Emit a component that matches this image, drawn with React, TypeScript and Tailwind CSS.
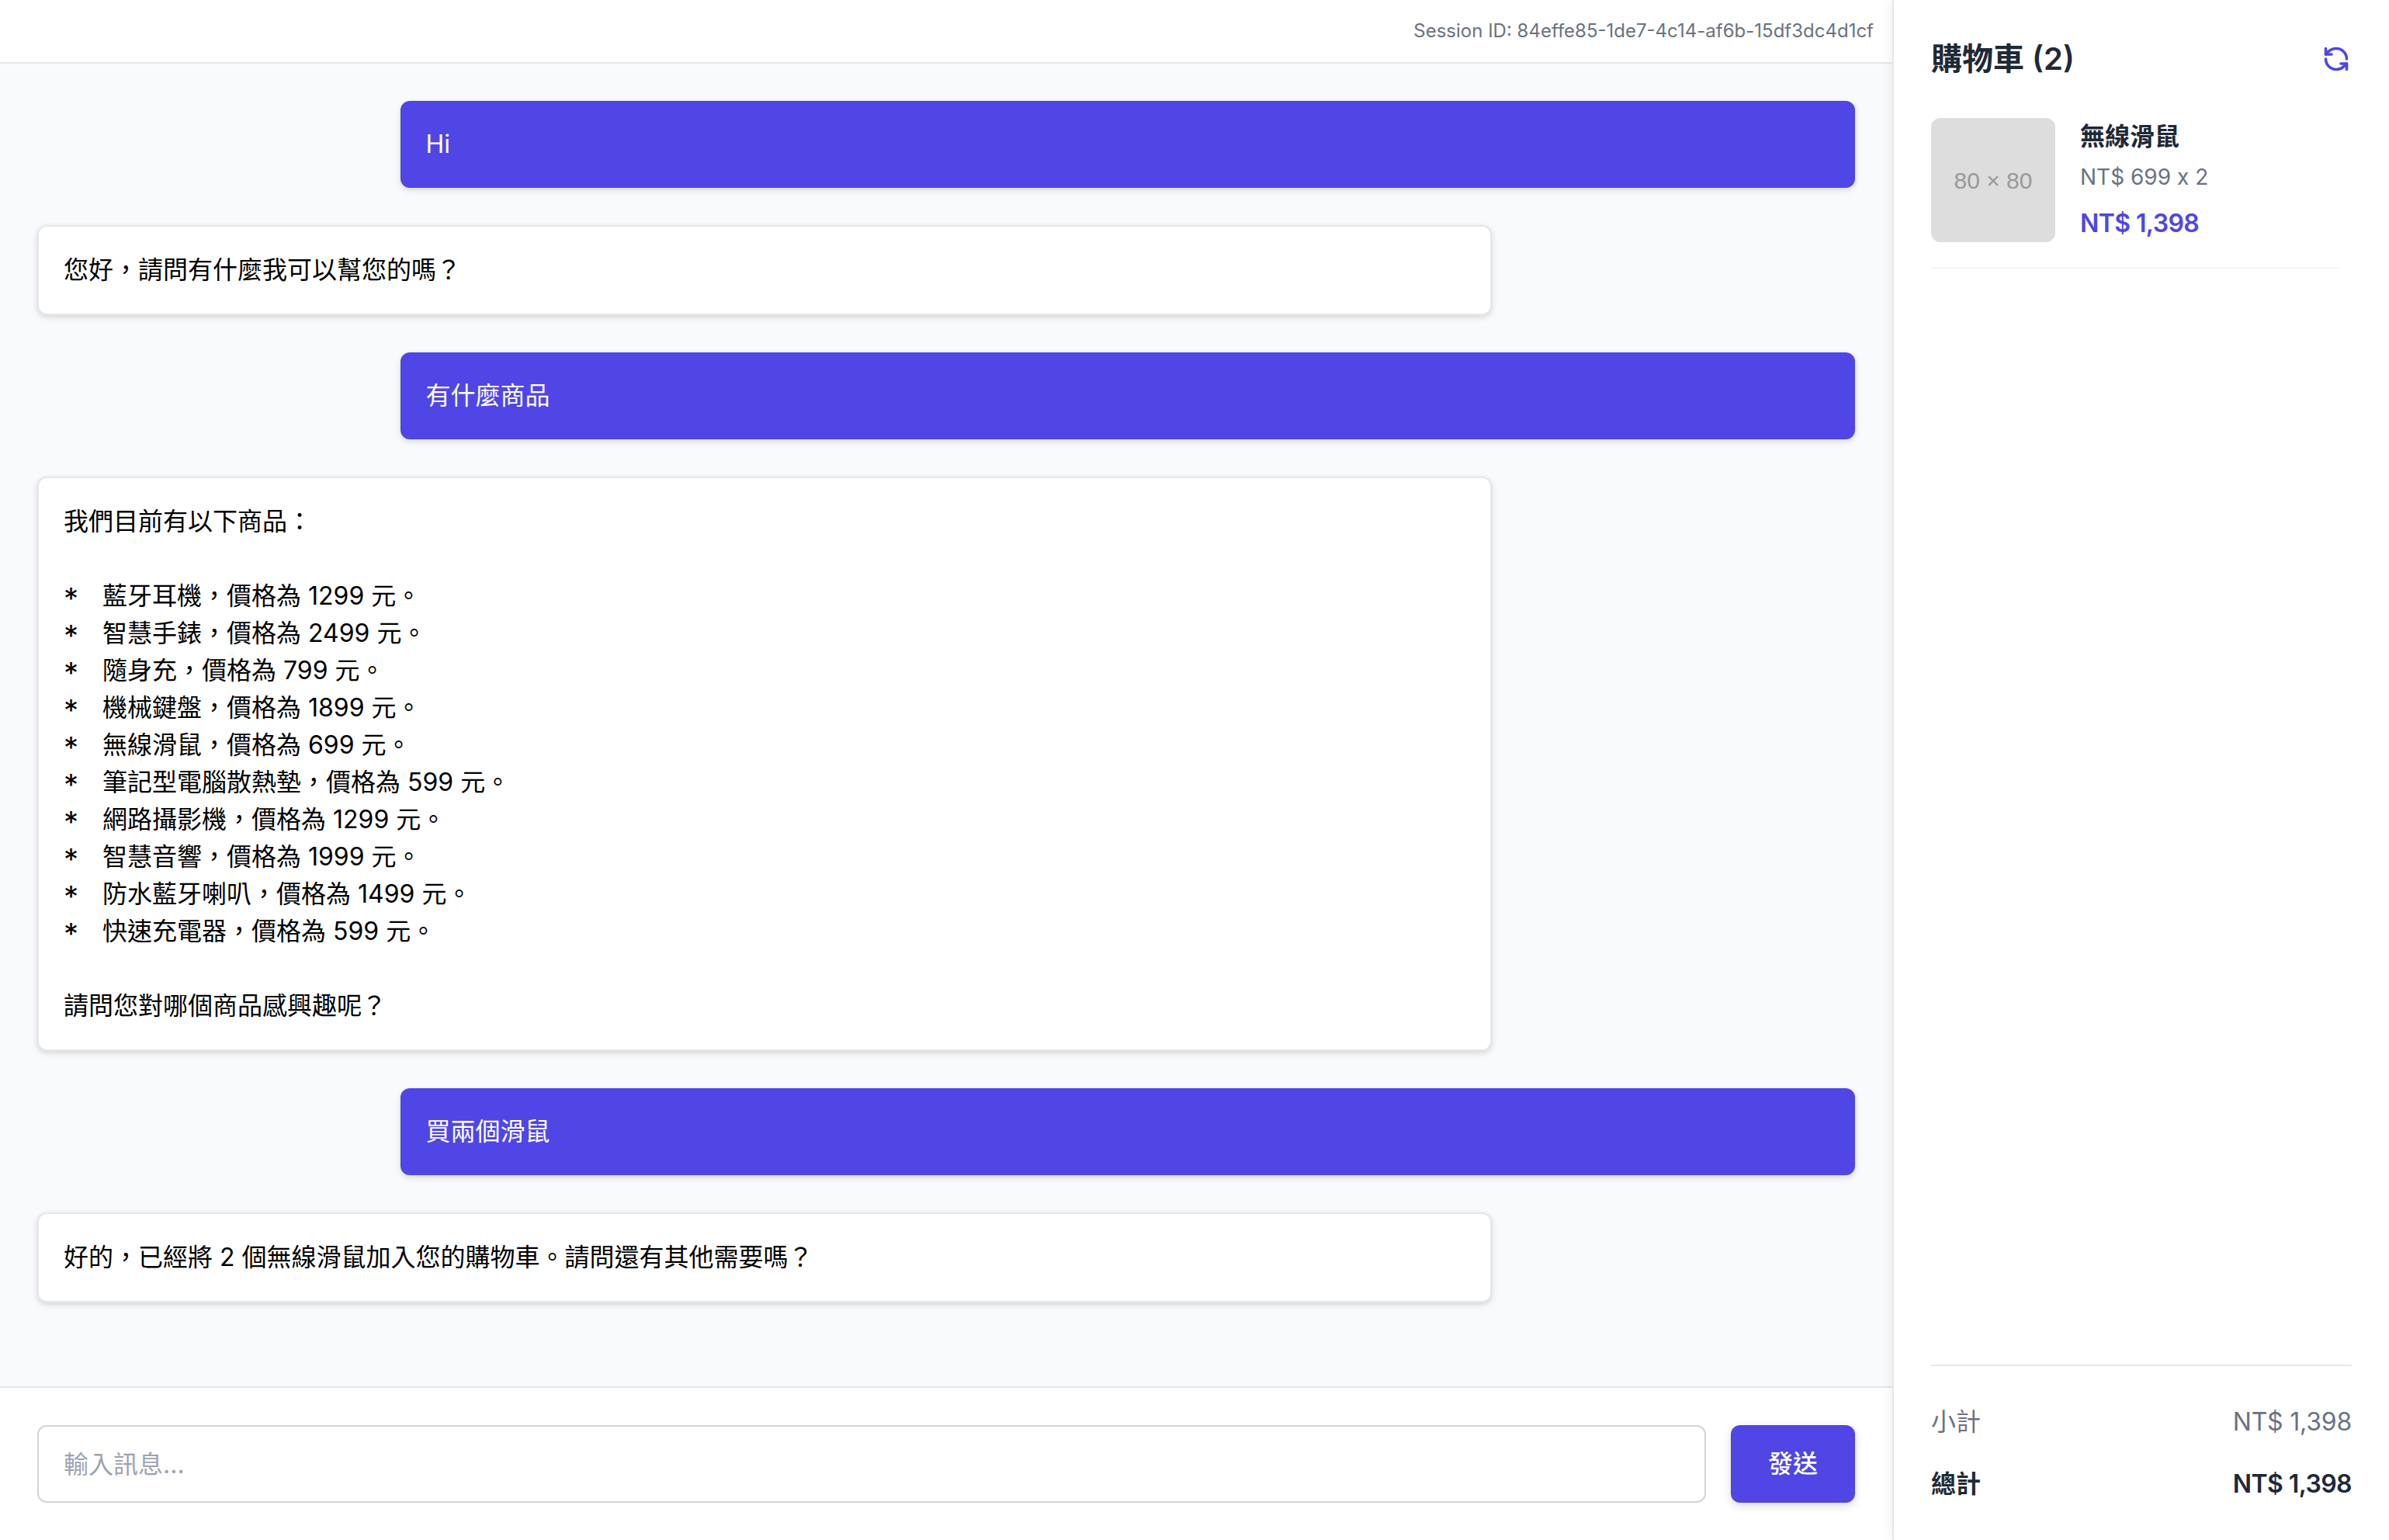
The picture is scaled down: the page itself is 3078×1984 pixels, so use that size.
import type { ReactNode } from 'react'
import { RefreshCcw } from 'lucide-react'

const products = [
  '藍牙耳機\uFF0C價格為 1299 元。',
  '智慧手錶\uFF0C價格為 2499 元。',
  '隨身充\uFF0C價格為 799 元。',
  '機械鍵盤\uFF0C價格為 1899 元。',
  '無線滑鼠\uFF0C價格為 699 元。',
  '筆記型電腦散熱墊\uFF0C價格為 599 元。',
  '網路攝影機\uFF0C價格為 1299 元。',
  '智慧音響\uFF0C價格為 1999 元。',
  '防水藍牙喇叭\uFF0C價格為 1499 元。',
  '快速充電器\uFF0C價格為 599 元。',
]

function UserBubble({ text }: { text: string }) {
  return (
    <div className="flex justify-end">
      <div className="w-[80%] rounded-[12px] bg-[#4f46e5] p-[32px] text-[32px] leading-[48px] text-white shadow-[0_2px_6px_rgba(0,0,0,0.1),0_4px_12px_rgba(0,0,0,0.06)]">
        {text}
      </div>
    </div>
  )
}

function BotBubble({ children }: { children: ReactNode }) {
  return (
    <div className="flex justify-start">
      <div className="w-[80%] rounded-[12px] border-2 border-[#e5e7eb] bg-white p-[32px] text-[32px] leading-[48px] text-black shadow-[0_2px_6px_rgba(0,0,0,0.1),0_4px_12px_rgba(0,0,0,0.06)]">
        {children}
      </div>
    </div>
  )
}

export default function App() {
  return (
    <div className="flex h-[1984px] w-full overflow-hidden bg-white font-['Inter','Noto_Sans_CJK_TC',sans-serif]">
      {/* chat column */}
      <div className="flex min-w-0 flex-1 flex-col">
        <div className="flex h-[82px] shrink-0 items-center justify-end border-b-2 border-[#e5e7eb] bg-white px-[24px] text-[24px] text-[#6b7280]">
          Session ID: 84effe85-1de7-4c14-af6b-15df3dc4d1cf
        </div>

        <div className="flex flex-1 flex-col gap-[48px] bg-[#f9fafb] p-[48px]">
          <UserBubble text="Hi" />
          <BotBubble>{'您好\uFF0C請問有什麼我可以幫您的嗎\uFF1F'}</BotBubble>
          <UserBubble text="有什麼商品" />
          <BotBubble>
            <p>{'我們目前有以下商品\uFF1A'}</p>
            <ul className="my-[48px]">
              {products.map(p => (
                <li key={p} className="flex">
                  <span className="w-[50px] shrink-0 pt-[6px] text-[38px] leading-[42px]">*</span>
                  <span>{p}</span>
                </li>
              ))}
            </ul>
            <p>{'請問您對哪個商品感興趣呢\uFF1F'}</p>
          </BotBubble>
          <UserBubble text="買兩個滑鼠" />
          <BotBubble>{'好的\uFF0C已經將 2 個無線滑鼠加入您的購物車。請問還有其他需要嗎\uFF1F'}</BotBubble>
        </div>

        <div className="flex shrink-0 gap-[32px] border-t-2 border-[#e5e7eb] bg-white p-[48px]">
          <input
            placeholder="輸入訊息..."
            className="h-[100px] min-w-0 flex-1 rounded-[12px] border-2 border-[#d1d5db] px-[32px] text-[32px] outline-none placeholder:text-[#9ca3af]"
          />
          <button className="h-[100px] w-[160px] rounded-[12px] bg-[#4f46e5] text-[32px] font-medium text-white shadow-[0_4px_12px_rgba(0,0,0,0.15)]">
            發送
          </button>
        </div>
      </div>

      {/* cart */}
      <aside className="flex w-[640px] shrink-0 flex-col border-l-2 border-[#e5e7eb] bg-white p-[48px] shadow-[-4px_0_12px_rgba(0,0,0,0.05)]">
        <div className="mb-[48px] flex items-center justify-between">
          <h2 className="text-[40px] leading-[56px] font-semibold text-[#1f2937]">購物車 (2)</h2>
          <RefreshCcw className="mr-[2px] h-[36px] w-[36px] text-[#4f46e5]" strokeWidth={2.4} />
        </div>

        <div className="flex-1 pr-[16px]">
          <div className="flex gap-[32px] border-b-2 border-[#f3f4f6] pb-[32px]">
            <div className="flex h-[160px] w-[160px] shrink-0 items-center justify-center rounded-[12px] bg-[#dddddd] font-['Liberation_Sans',sans-serif] text-[30px] text-[#999999]">
              80 × 80
            </div>
            <div>
              <div className="text-[32px] leading-[48px] font-semibold text-[#1f2937]">無線滑鼠</div>
              <div className="mt-[8px] text-[28px] leading-[40px] text-[#6b7280] [font-feature-settings:'calt'_0]">NT$ 699 x 2</div>
              <div className="mt-[16px] text-[32px] leading-[48px] font-semibold tracking-[-0.6px] text-[#4f46e5]">NT$ 1,398</div>
            </div>
          </div>
        </div>

        <div className="flex flex-col gap-[32px] border-t-2 border-[#e5e7eb] pt-[48px] text-[32px] leading-[48px]">
          <div className="flex justify-between text-[#6b7280]">
            <span>小計</span>
            <span className="tracking-[-0.2px]">NT$ 1,398</span>
          </div>
          <div className="flex justify-between font-semibold text-[#1f2937]">
            <span>總計</span>
            <span className="tracking-[-0.6px]">NT$ 1,398</span>
          </div>
        </div>
      </aside>
    </div>
  )
}
